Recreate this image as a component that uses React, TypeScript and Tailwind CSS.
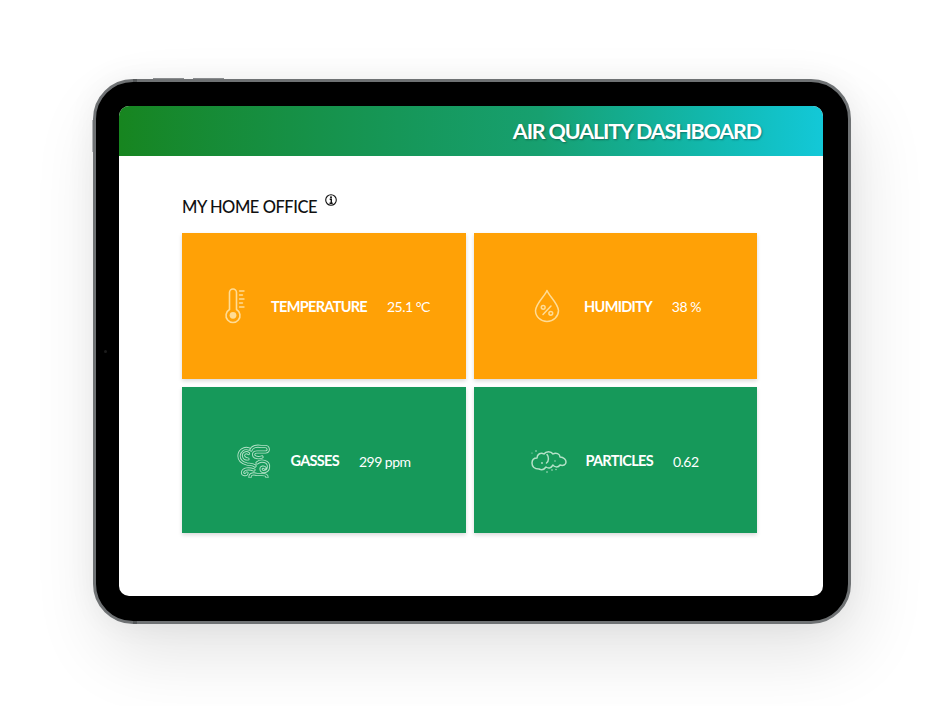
import React from "react";

const stroke = { fill: "none", stroke: "currentColor", strokeLinecap: "round", strokeLinejoin: "round" } as const;

function Thermo() {
  return (
    <svg width="22" height="36" viewBox="0 0 22 36" {...stroke} strokeWidth="1.6" className="text-[#ffdc96]">
      <path d="M5.500 21.500V4.500a3.500 3.500 0 0 1 7 0v17a7 7 0 1 1-7 0Z" />
      <circle cx="9" cy="27.300" r="3.400" fill="currentColor" stroke="none" />
      <path d="M15.500 3h4.500M15.500 7h3M15.500 11h4.500M15.500 15h3M15.500 19h4.500" strokeWidth="1.400" />
    </svg>
  );
}

function Drop() {
  return (
    <svg width="26" height="34" viewBox="0 0 26 34" {...stroke} strokeWidth="1.500" className="text-[#ffdc96]">
      <path d="M13 1.500C11 7 2 14 1.500 21.500a11.500 11 0 0 0 23 0C24 14 15 7 13 1.500Z" />
      <path d="M9 25.500 17 17" />
      <circle cx="9.200" cy="18.300" r="1.900" />
      <circle cx="16.800" cy="24.300" r="1.900" />
    </svg>
  );
}

const gasPaths = [
  "M12 5C7 3 2 7 2 12C2 17 6 19 10 20C13 20.500 16 20 18 22",
  "M11.500 9.500C9 7.500 6 9.500 6.500 12C7 14 9 15 11 15",
  "M14 6C15 2.500 20 1.500 24 2.500H28C32 2.500 32.500 8 28.500 8H20C17 8 16 10 17 12C19 14 22 14 25 13",
  "M20 19C24 15.500 32 17 31.500 23C31 28.500 24 29 24 25C24 23 27 22.500 28 24",
  "M17 26C12 24 6 24.500 5.500 28.500C5.500 31 9.500 31.500 10 29",
  "M13 33C13 29.500 17 29.500 20 30.500H25C28 30.500 30 31 30 33",
];

function Gas() {
  return (
    <svg width="34" height="34" viewBox="0 0 34 34" fill="none" strokeLinecap="round" strokeLinejoin="round">
      {gasPaths.map((d) => (
        <path key={d} d={d} stroke="#b5e2c8" strokeWidth="3.200" />
      ))}
      {gasPaths.map((d) => (
        <path key={d + "i"} d={d} stroke="#16995a" strokeWidth="1.400" />
      ))}
    </svg>
  );
}

function Cloud() {
  return (
    <svg width="36" height="24" viewBox="0 0 36 24" {...stroke} strokeWidth="1.500" className="text-[#b5e2c8]">
      <path d="M8 20C3 20 1 17 1 14C1 11 3 9 6 9C6 5 10 3 13 5C15 2 20 2 22 5C25 3 29 5 29 8C33 8 35 11 35 13C35 16 32 17 29 16C27 19 23 18 22 16C20 19 18 20 15 18C13 21 10 21 8 20Z" />
      <path d="M16 5.500C18 8 18 12 15.500 14" />
      <g fill="currentColor" stroke="none">
        <circle cx="5" cy="2" r=".8" /><circle cx="1" cy="4" r=".6" /><circle cx="11" cy="14" r=".9" />
        <circle cx="16" cy="23" r=".8" /><circle cx="21" cy="21" r=".8" /><circle cx="25" cy="20.500" r=".7" />
        <circle cx="24" cy="12" r=".7" />
      </g>
    </svg>
  );
}

function Card({ bg, icon, label, value, gap, shift, labelNudge }: { bg: string; icon: React.ReactNode; label: string; value: string; gap: string; shift: string; labelNudge: string }) {
  return (
    <div className={`${bg} h-[146px] flex items-center justify-center text-white shadow-[0_2px_4px_rgba(0,0,0,0.15)]`}>
      <div className={`flex items-center ${shift}`}>
        <div className={`flex justify-center ${gap}`}>{icon}</div>
        <span className={`text-[14.500px] font-bold tracking-[-0.7px] ${labelNudge}`}>{label}</span>
        <span className="text-[14px] tracking-[-0.5px] ml-[20px]">{value}</span>
      </div>
    </div>
  );
}

export default function App() {
  return (
    <div className="h-[706px] w-[936px] bg-white overflow-hidden pt-[79px] pl-[93px] font-['Lato',sans-serif]">
      <div className="relative w-[758px] h-[545px] rounded-[40px] bg-black border-[3px] border-[#6f7274] shadow-[8px_30px_70px_rgba(0,0,0,0.11),0_0_30px_rgba(0,0,0,0.05)] pt-[24px] pl-[23px]">
        <div className="absolute -top-[4px] left-[57px] w-[31px] h-[1px] bg-[#8a8c8e]" />
        <div className="absolute -top-[4px] left-[97px] w-[31px] h-[1px] bg-[#8a8c8e]" />
        <div className="absolute -top-[3px] left-[37px] w-[4px] h-[3px] bg-[#55585a]" />
        <div className="absolute -bottom-[3px] left-[37px] w-[4px] h-[3px] bg-[#55585a]" />
        <div className="absolute top-[38px] -left-[4px] w-[1px] h-[32px] bg-[#b0b2b4]" />
        <div className="absolute top-[268px] left-[8px] w-[3px] h-[3px] rounded-full bg-[#1c1c1c]" />
        <div className="w-[704px] h-[490px] bg-white rounded-[10px] overflow-hidden flex flex-col">
          <div className="h-[50px] shrink-0 bg-gradient-to-r from-[#17851f] via-[#17a070] via-60% to-[#13c8d8] flex items-center justify-end pr-[62px]">
            <h1 className="text-[21.500px] font-bold text-white tracking-[-1.15px] [text-shadow:1px_1px_2px_rgba(0,0,0,0.35)]">AIR QUALITY DASHBOARD</h1>
          </div>
          <div className="pl-[63px] pr-[66px] pt-[36px]">
            <div className="flex items-start h-[41px]">
              <h2 className="text-[16.500px] leading-[30px] font-medium text-[#111] tracking-[-0.45px]">MY HOME OFFICE</h2>
              <svg width="12" height="12" viewBox="0 0 12 12" className="ml-[8px] mt-[2px] text-[#111]" fill="none" stroke="currentColor">
                <circle cx="6" cy="6" r="5.300" strokeWidth="1.100" />
                <path d="M4.700 5.200H6.300V9M4.500 9.200H7.700" strokeWidth="1.400" />
                <circle cx="6" cy="3.200" r="1" fill="currentColor" stroke="none" />
              </svg>
            </div>
            <div className="grid grid-cols-[284px_283px] gap-[8px]">
              <Card bg="bg-[#ffa106]" icon={<Thermo />} label="TEMPERATURE" value="25.1 °C" gap="mr-[25px]" shift="ml-[6px]" labelNudge="mt-[2px]" />
              <Card bg="bg-[#ffa106]" icon={<Drop />} label="HUMIDITY" value="38 %" gap="mr-[24px]" shift="ml-[4px]" labelNudge="mt-[2px]" />
              <Card bg="bg-[#16995a]" icon={<Gas />} label="GASSES" value="299 ppm" gap="mr-[19px]" shift="mt-[2px]" labelNudge="" />
              <Card bg="bg-[#16995a]" icon={<Cloud />} label="PARTICLES" value="0.62" gap="mr-[18px]" shift="-ml-[1px] mt-[2px]" labelNudge="" />
            </div>
          </div>
        </div>
      </div>
    </div>
  );
}
